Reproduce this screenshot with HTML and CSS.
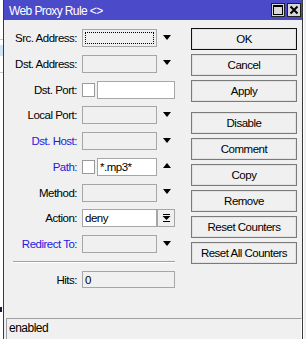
FILE: index.html
```html
<!DOCTYPE html>
<html lang="en">

<head>
    <meta charset="UTF-8">
    <meta name="viewport" content="width=device-width, initial-scale=1">
    <title>Web Proxy Rule</title>
    <link rel="stylesheet" href="styles.css">
</head>

<body>

    <div class="desk">
        <div class="behind">
            <div class="b-line b-l1"></div>
            <div class="b-sel"></div>
            <div class="b-line b-l2"></div>
            <div class="b-glyph"></div>
        </div>

        <div class="window">
            <div class="titlebar">
                <span class="title">Web Proxy Rule &lt;&gt;</span>
                <div class="title_btns">
                    <span class="tbtn">
                        <svg width="12" height="12" viewBox="0 0 12 12"><rect x="1.5" y="1.5" width="9" height="9" fill="none" stroke="#000" stroke-width="1"/><rect x="1" y="1" width="10" height="2" fill="#000"/></svg>
                    </span>
                    <span class="tbtn">
                        <svg width="12" height="12" viewBox="0 0 12 12"><path d="M2.5 2.5 L9.5 9.5 M9.5 2.5 L2.5 9.5" stroke="#000" stroke-width="2"/></svg>
                    </span>
                </div>
            </div>

            <div class="content">
                <div class="form">
                    <div class="row">
                        <label class="lbl">Src. Address:</label>
                        <div class="box combo focus"><span class="focus_ring"></span></div>
                        <span class="arrow down"></span>
                    </div>
                    <div class="row">
                        <label class="lbl">Dst. Address:</label>
                        <div class="box combo"></div>
                        <span class="arrow down"></span>
                    </div>
                    <div class="row">
                        <label class="lbl">Dst. Port:</label>
                        <span class="check"></span>
                        <div class="box field port"></div>
                    </div>
                    <div class="row">
                        <label class="lbl">Local Port:</label>
                        <div class="box combo"></div>
                        <span class="arrow down"></span>
                    </div>
                    <div class="row">
                        <label class="lbl blue">Dst. Host:</label>
                        <div class="box combo"></div>
                        <span class="arrow down"></span>
                    </div>
                    <div class="row">
                        <label class="lbl blue">Path:</label>
                        <span class="check"></span>
                        <div class="box field path">*.mp3*</div>
                        <span class="arrow up"></span>
                    </div>
                    <div class="row">
                        <label class="lbl">Method:</label>
                        <div class="box combo"></div>
                        <span class="arrow down"></span>
                    </div>
                    <div class="row">
                        <label class="lbl">Action:</label>
                        <div class="box field action">deny</div>
                        <span class="drop_btn">
                            <svg width="9" height="9" viewBox="0 0 9 9"><rect x="1" y="0" width="7" height="1" fill="#000"/><path d="M0.5 2 L8.5 2 L4.5 6 Z" fill="#000"/><rect x="1" y="7" width="7" height="1" fill="#000"/></svg>
                        </span>
                    </div>
                    <div class="row">
                        <label class="lbl blue">Redirect To:</label>
                        <div class="box combo"></div>
                        <span class="arrow down"></span>
                    </div>

                    <div class="separator"></div>

                    <div class="row">
                        <label class="lbl">Hits:</label>
                        <div class="box combo hits">0</div>
                    </div>
                </div>

                <div class="actions">
                    <button class="btn default">OK</button>
                    <button class="btn">Cancel</button>
                    <button class="btn">Apply</button>
                    <button class="btn spaced">Disable</button>
                    <button class="btn">Comment</button>
                    <button class="btn">Copy</button>
                    <button class="btn">Remove</button>
                    <button class="btn">Reset Counters</button>
                    <button class="btn">Reset All Counters</button>
                </div>
            </div>

            <div class="status">enabled</div>
        </div>

        <div class="behind_right"></div>
    </div>

</body>

</html>
```

FILE: styles.css
```css
body {
    margin: 0;
    background: #f4f4f4;
    font-family: 'Liberation Sans', Arial, sans-serif;
    font-size: 11.5px;
    letter-spacing: -0.5px;
    color: #000;
    overflow: hidden;
}

.desk {
    display: flex;
    height: 339px;
}

/* window behind, only a sliver shows */
.behind {
    width: 3px;
    background: #ffffff;
    position: relative;
}

.b-line {
    position: absolute;
    left: 0;
    width: 3px;
    height: 1px;
    background: #c8c8c8;
}

.b-l1 {
    top: 39px;
}

.b-l2 {
    top: 72px;
}

.b-sel {
    position: absolute;
    left: 0;
    top: 45px;
    width: 3px;
    height: 11px;
    background: #cde5f7;
}

.b-glyph {
    position: absolute;
    left: 0;
    top: 307px;
    width: 2px;
    height: 5px;
    background: #1a1a40;
}

.behind_right {
    flex: 1;
    background: #f0f0f0;
    border-left: 1px solid #ffffff;
}

.window {
    width: 300px;
    box-sizing: border-box;
    border-left: 1px solid #3a3a3a;
    border-right: 1px solid #3a3a3a;
    background: #f0f0f0;
    display: flex;
    flex-direction: column;
}

.titlebar {
    height: 20px;
    background: #4b4bca;
    display: flex;
    align-items: center;
    justify-content: space-between;
    padding: 0 1px 0 5px;
}

.title {
    color: #ffffff;
    font-size: 12px;
    letter-spacing: -0.6px;
    padding-top: 1px;
}

.title_btns {
    display: flex;
    gap: 2px;
}

.tbtn {
    width: 14px;
    height: 14px;
    box-sizing: border-box;
    border: 1px solid #202020;
    background: #d8d8d8;
    display: flex;
    justify-content: center;
    align-items: center;
}

.content {
    flex: 1;
    display: flex;
}

.form {
    width: 180px;
    padding-top: 9px;
}

.row {
    display: flex;
    align-items: center;
    height: 18px;
    margin-bottom: 7.75px;
}

.lbl {
    width: 73px;
    text-align: right;
    margin-right: 5px;
    white-space: nowrap;
}

.lbl.blue {
    color: #1c1ce0;
}

.box {
    height: 18px;
    box-sizing: border-box;
    border: 1px solid #a6a6a6;
    padding: 0 2px;
    line-height: 16px;
    position: relative;
    white-space: nowrap;
}

.combo {
    width: 75px;
    background: #f0f0f0;
}

.field {
    background: #ffffff;
}

.focus_ring {
    position: absolute;
    top: 2px;
    left: 2px;
    right: 2px;
    bottom: 2px;
    border: 1px dotted #000;
}

.check {
    width: 13px;
    height: 14px;
    box-sizing: border-box;
    border: 1px solid #9a9a9a;
    background: #ffffff;
    margin-right: 2px;
}

.port {
    width: 78px;
}

.path {
    width: 60px;
}

.action {
    width: 75px;
}

.hits {
    width: 93px;
    height: 17px;
}

.arrow {
    width: 0;
    height: 0;
    margin-left: 6px;
    margin-bottom: 2px;
    border-left: 4.5px solid transparent;
    border-right: 4.5px solid transparent;
}

.arrow.down {
    border-top: 5px solid #000;
}

.arrow.up {
    border-bottom: 5px solid #000;
}

.drop_btn {
    width: 18px;
    height: 18px;
    box-sizing: border-box;
    border: 1px solid #a6a6a6;
    background: #f0f0f0;
    display: flex;
    justify-content: center;
    align-items: center;
}

.separator {
    margin: 1px 0 8px 9px;
    width: 162px;
    height: 1px;
    background: #a0a0a0;
    border-bottom: 1px solid #ffffff;
}

.actions {
    width: 106px;
    margin-left: 7px;
    padding-top: 8px;
    display: flex;
    flex-direction: column;
    gap: 4px;
}

.btn {
    height: 22px;
    box-sizing: border-box;
    border: 1px solid #7a7a7a;
    box-shadow: inset 0 0 0 1px #e2e2e2;
    background: #f0f0f0;
    font-family: inherit;
    font-size: 11.5px;
    letter-spacing: -0.5px;
    color: #000;
    padding: 0;
}

.btn.default {
    border-color: #101010;
}

.btn.spaced {
    margin-top: 6px;
}

.status {
    height: 21px;
    box-sizing: border-box;
    margin-left: 2px;
    border-top: 1px solid #a0a0a0;
    border-left: 1px solid #a0a0a0;
    border-right: 1px solid #ffffff;
    padding: 2px 0 0 2px;
    font-size: 12px;
}
```
